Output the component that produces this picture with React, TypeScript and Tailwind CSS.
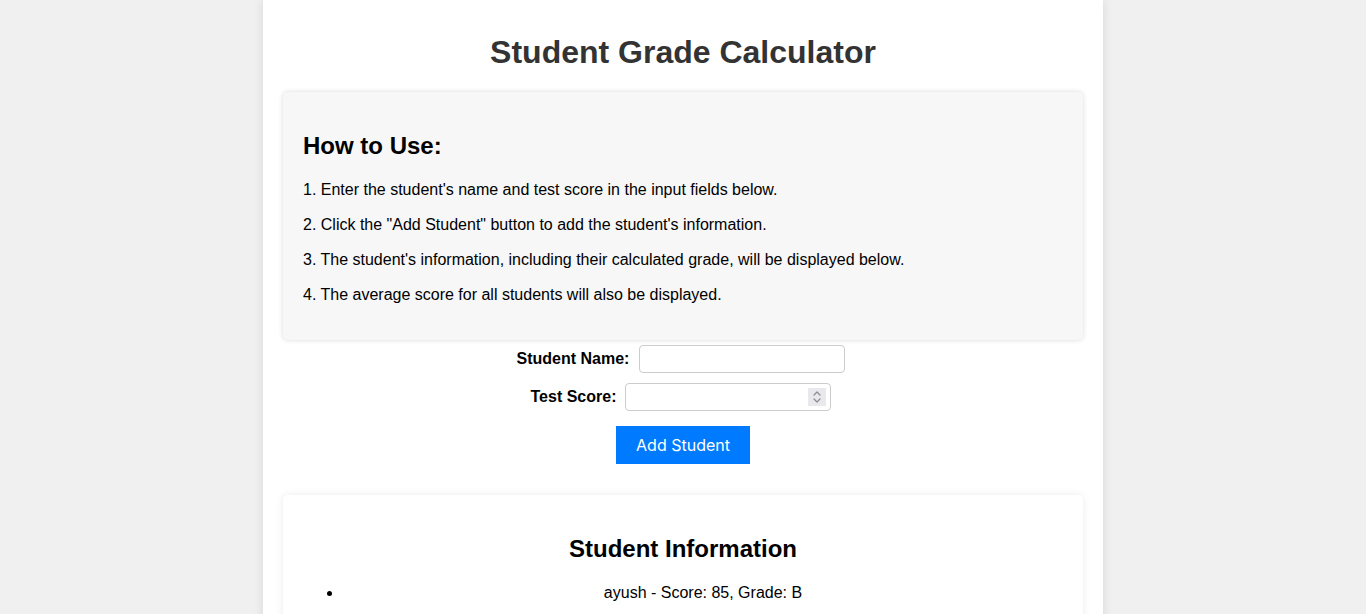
import React from "react";

export default function App() {
  return (
    <div className="min-h-[614px] w-full bg-[#f0f0f0] font-['Liberation_Sans',Arial,sans-serif] text-black">
      <div className="mx-auto w-[840px] bg-white px-5 pt-[34px] pb-5 shadow-[0_0_10px_rgba(0,0,0,0.1)]">
        <h1 className="m-0 text-center text-[32px] font-bold leading-[37px] text-[#333]">
          Student Grade Calculator
        </h1>
        <div className="mt-[21px] rounded-[5px] bg-[#f7f7f7] px-5 py-5 shadow-[0_0_5px_rgba(0,0,0,0.15)]">
          <h2 className="mt-5 text-[24px] font-bold leading-[28px]">How to Use:</h2>
          <p className="mt-[21px] text-[16px] leading-[18px]">
            1. Enter the student's name and test score in the input fields below.
          </p>
          <p className="mt-[17px] text-[16px] leading-[18px]">
            2. Click the "Add Student" button to add the student's information.
          </p>
          <p className="mt-[17px] text-[16px] leading-[18px]">
            3. The student's information, including their calculated grade, will be displayed below.
          </p>
          <p className="mt-[17px] mb-4 text-[16px] leading-[18px]">
            4. The average score for all students will also be displayed.
          </p>
        </div>
        <div className="mt-[5px] flex flex-col items-center">
          <div className="flex items-center">
            <label className="mr-[10px] text-[16px] font-bold">Student Name:</label>
            <input
              type="text"
              className="mr-[4px] h-[28px] w-[206px] rounded-[4px] border border-[#ccc] bg-white px-2 text-[14px] outline-none"
            />
          </div>
          <div className="mt-[10px] flex items-center">
            <label className="mr-[9px] text-[16px] font-bold">Test Score:</label>
            <div className="relative mr-[4px]">
              <input
                type="number"
                className="h-[28px] w-[206px] rounded-[4px] border border-[#ccc] bg-white px-2 text-[14px] outline-none [appearance:textfield] [&::-webkit-inner-spin-button]:appearance-none"
              />
              <div className="pointer-events-none absolute right-[5px] top-[5px] flex h-[18px] w-[18px] items-center justify-center bg-[#e9e9ed]">
                <svg width="10" height="14" viewBox="0 0 10 14" fill="none" stroke="#8a8a8f" strokeWidth="1.2" strokeLinecap="round" strokeLinejoin="round">
                  <path d="M2 5 L5 2 L8 5" />
                  <path d="M2 9 L5 12 L8 9" />
                </svg>
              </div>
            </div>
          </div>
          <button className="mt-[15px] h-[38px] w-[134px] bg-[#007bff] font-['Inter',sans-serif] text-[16px] text-white">
            Add Student
          </button>
        </div>
        <div className="mt-[31px] rounded-[5px] bg-white px-5 pt-5 pb-5 shadow-[0_0_8px_rgba(0,0,0,0.08)]">
          <h2 className="mt-5 text-center text-[24px] font-bold leading-[28px]">Student Information</h2>
          <ul className="mt-[21px] mb-4 list-disc pl-10">
            <li className="text-center text-[16px] leading-[18px]">ayush - Score: 85, Grade: B</li>
          </ul>
        </div>
      </div>
    </div>
  );
}
